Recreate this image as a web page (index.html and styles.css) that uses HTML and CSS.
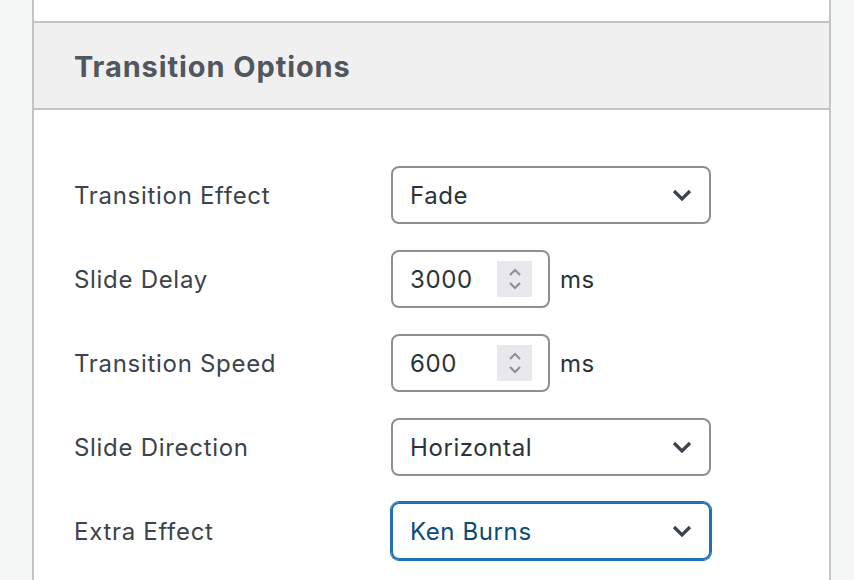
FILE: index.html
```html
<!DOCTYPE html>
<html lang="en">
<head>
    <meta charset="UTF-8">
    <meta name="viewport" content="width=device-width, initial-scale=1.0">
    <title>Transition Options</title>
    <link rel="stylesheet" href="styles.css">
</head>
<body>
    <div class="wrap">
        <div class="postbox-prev"></div>

        <div class="postbox">
            <div class="postbox-header">
                <h2>Transition Options</h2>
            </div>

            <div class="inside">
                <div class="form-table">
                    <label class="field-label">Transition Effect</label>
                    <div class="field">
                        <div class="select">
                            <span>Fade</span>
                            <svg class="chevron" viewBox="0 0 20 12"><path d="M2 2 L10 10 L18 2"/></svg>
                        </div>
                    </div>

                    <label class="field-label">Slide Delay</label>
                    <div class="field">
                        <div class="number">
                            <span>3000</span>
                            <span class="spinner">
                                <svg viewBox="0 0 16 28"><path d="M3 10 L8 5 L13 10"/><path d="M3 18 L8 23 L13 18"/></svg>
                            </span>
                        </div>
                        <span class="unit">ms</span>
                    </div>

                    <label class="field-label">Transition Speed</label>
                    <div class="field">
                        <div class="number">
                            <span>600</span>
                            <span class="spinner">
                                <svg viewBox="0 0 16 28"><path d="M3 10 L8 5 L13 10"/><path d="M3 18 L8 23 L13 18"/></svg>
                            </span>
                        </div>
                        <span class="unit">ms</span>
                    </div>

                    <label class="field-label">Slide Direction</label>
                    <div class="field">
                        <div class="select">
                            <span>Horizontal</span>
                            <svg class="chevron" viewBox="0 0 20 12"><path d="M2 2 L10 10 L18 2"/></svg>
                        </div>
                    </div>

                    <label class="field-label">Extra Effect</label>
                    <div class="field">
                        <div class="select focused">
                            <span>Ken Burns</span>
                            <svg class="chevron" viewBox="0 0 20 12"><path d="M2 2 L10 10 L18 2"/></svg>
                        </div>
                    </div>
                </div>
            </div>
        </div>
    </div>
</body>
</html>
```

FILE: styles.css
```css
* {
    margin: 0;
    padding: 0;
    box-sizing: border-box;
}
body {
    font-family: Inter, 'Noto Sans', sans-serif;
    background: #f6f7f7;
    color: #3c434a;
    overflow: hidden;
}
.wrap {
    width: 799px;
    margin-left: 32px;
}
.postbox-prev {
    height: 21px;
    background: #fff;
    border-left: 2px solid #c3c4c7;
    border-right: 2px solid #c3c4c7;
}
.postbox {
    background: #fff;
    border: 2px solid #c3c4c7;
    border-bottom: none;
    height: 560px;
}
.postbox-header {
    background: #f0f0f1;
    border-bottom: 2px solid #c3c4c7;
    height: 87px;
    display: flex;
    align-items: center;
    padding-left: 40px;
}
.postbox-header h2 {
    font-size: 29px;
    font-weight: 700;
    color: #50575e;
    letter-spacing: 0.9px;
    padding-top: 1px;
}
.inside {
    padding: 56px 0 0 40px;
}
.form-table {
    display: grid;
    grid-template-columns: 317px auto;
    row-gap: 26px;
    align-items: center;
}
.field-label {
    font-size: 24px;
    letter-spacing: 0.7px;
    color: #3c434a;
}
.field {
    display: flex;
    align-items: center;
    gap: 10px;
}
.select {
    width: 320px;
    height: 58px;
    border: 2px solid #8c8f94;
    border-radius: 8px;
    display: flex;
    align-items: center;
    justify-content: space-between;
    padding: 0 17px 0 17px;
    font-size: 24px;
    letter-spacing: 0.6px;
    color: #2c3338;
}
.select.focused {
    border-color: #2271b1;
    box-shadow: 0 0 0 1px #2271b1;
    color: #0a4b78;
}
.chevron {
    width: 20px;
    height: 12px;
    fill: none;
    stroke: #3c434a;
    stroke-width: 3.2;
}
.number {
    width: 159px;
    height: 58px;
    border: 2px solid #8c8f94;
    border-radius: 8px;
    display: flex;
    align-items: center;
    justify-content: space-between;
    padding: 0 16px 0 17px;
    font-size: 24px;
    letter-spacing: 0.6px;
    color: #2c3338;
}
.spinner {
    width: 35px;
    height: 36px;
    background: #e9e9ed;
    display: flex;
    align-items: center;
    justify-content: center;
}
.spinner svg {
    width: 16px;
    height: 28px;
    fill: none;
    stroke: #8c8f94;
    stroke-width: 2;
}
.unit {
    font-size: 24px;
    letter-spacing: 0.6px;
    color: #2c3338;
}
```
